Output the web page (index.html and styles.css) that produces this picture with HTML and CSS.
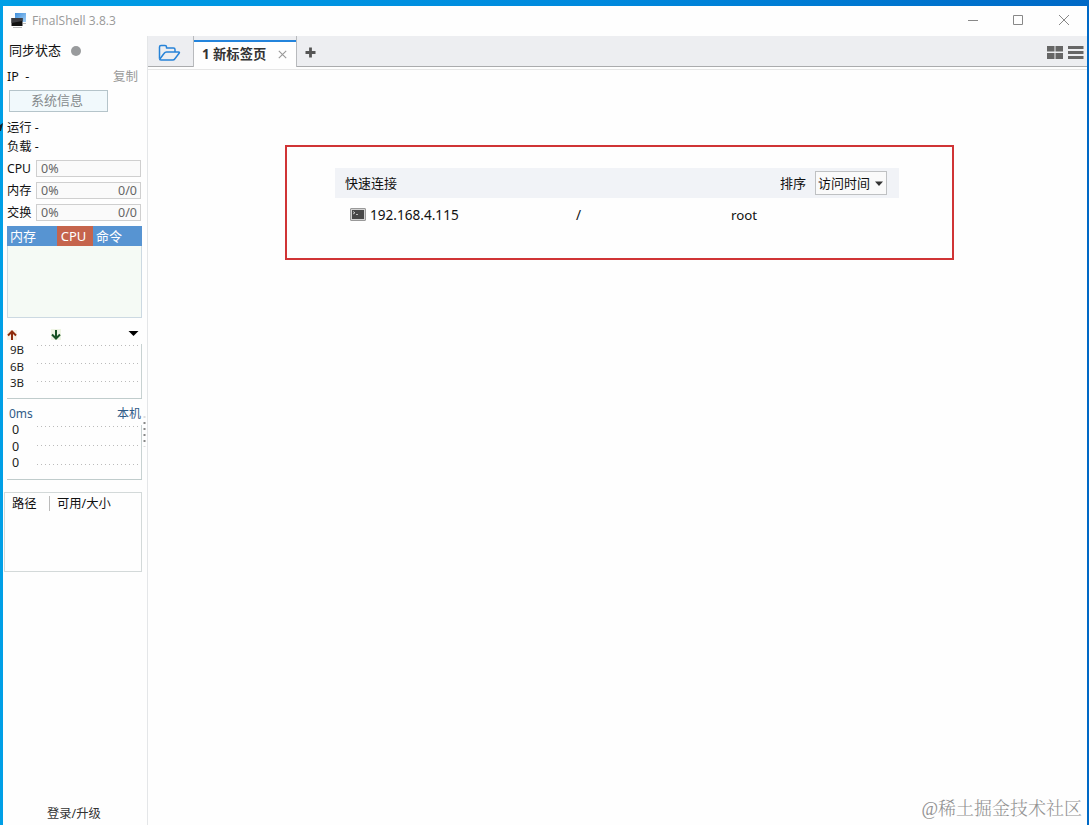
FILE: index.html
```html
<!DOCTYPE html>
<html lang="zh-CN">
<head>
<meta charset="utf-8">
<title>FinalShell 3.8.3</title>
<link rel="stylesheet" href="styles.css">
</head>
<body>
<div class="desktop">
<svg class="desktop-icon" width="3" height="9" viewBox="0 0 3 9"><path d="M3 0L1 8H0V2z" fill="#16222a"/></svg>
<div class="window">
  <header class="titlebar">
    <svg class="logo" width="17" height="17" viewBox="0 0 17 17">
      <defs><linearGradient id="screen" x1="0" y1="0" x2="1" y2="1"><stop offset="0" stop-color="#3f8fdc"/><stop offset="1" stop-color="#a5d0f5"/></linearGradient></defs>
      <rect x="4" y="1" width="11" height="9" fill="url(#screen)"/>
      <rect x="0.5" y="6" width="11" height="8" fill="#111"/>
      <path d="M0.5 6h11v3l-11 2z" fill="#3c3c40"/>
      <path d="M2 15.500h9M12 11.500h3" stroke="#bbb"/>
    </svg>
    <span class="app-name">FinalShell 3.8.3</span>
    <svg class="controls" width="103" height="12" viewBox="0 0 103 12" fill="none" stroke="#888">
      <path d="M0 6.500h10M45.500 1.500h9v9h-9zM91 1l10 10M101 1l-10 10"/>
    </svg>
  </header>
  <div class="body">
    <aside class="sidebar">
      <div class="sync"><span>同步状态</span><i class="dot"></i></div>
      <div class="ip"><span>IP&nbsp; -</span><span class="copy">复制</span></div>
      <div class="sysinfo">系统信息</div>
      <div class="stat">运行 -</div>
      <div class="stat">负载 -</div>
      <div class="meters">
        <div class="meter"><span class="name">CPU</span><div class="track"><span>0%</span></div></div>
        <div class="meter"><span class="name">内存</span><div class="track"><span>0%</span><span>0/0</span></div></div>
        <div class="meter"><span class="name">交换</span><div class="track"><span>0%</span><span>0/0</span></div></div>
      </div>
      <div class="procs">
        <div class="procs-head"><span class="col-mem">内存</span><span class="col-cpu">CPU</span><span class="col-cmd">命令</span></div>
      </div>
      <div class="net-head">
        <svg width="136" height="14" viewBox="0 0 136 14" fill="none">
          <rect x="0" y="2" width="10" height="10" fill="#f7f3e8"/>
          <path d="M5 12V4M1 7.500l4-4 4 4" stroke="#8f2c0c" stroke-width="2"/>
          <rect x="44" y="1" width="10" height="11" fill="#eef4e4"/>
          <path d="M49 2v8M45 6.500l4 4 4-4" stroke="#175223" stroke-width="2"/>
          <path d="M121.500 3h10l-5 5z" fill="#000"/>
        </svg>
      </div>
      <div class="chart net">
        <div class="labels"><span>9B</span><span>6B</span><span>3B</span></div>
        <div class="plot"><i></i><i></i><i></i></div>
      </div>
      <div class="ping-head"><span>0ms</span><span>本机</span></div>
      <div class="chart ping">
        <div class="labels"><span>0</span><span>0</span><span>0</span></div>
        <div class="plot"><i></i><i></i><i></i></div>
      </div>
      <div class="disk"><span class="path">路径</span><span class="size">可用/大小</span></div>
      <div class="login">登录/升级</div>
      <svg class="grip" width="3" height="32" viewBox="0 0 3 32"><path d="M1.500 1v2M1.500 31v1" stroke="#ddd" stroke-width="2"/><path d="M1.500 7v2M1.500 13v2M1.500 19v2M1.500 25v2" stroke="#888" stroke-width="2"/></svg>
    </aside>
    <main class="main">
      <nav class="tabs">
        <div class="folder">
          <svg width="23" height="18" viewBox="0 0 23 18" fill="none" stroke="#2783d8" stroke-width="1.500" stroke-linejoin="round">
            <path d="M1.500 14.500V3q0-1.500 1.500-1.500h4q1.500 0 1.500 1.500v1h7q1.500 0 1.500 1.500v2.500"/>
            <path d="M1.500 15.500l4.500-6q1-1.500 2.500-1.500h12q1.500 0 .6 1.200l-4 5.300q-1 1.500-2.500 1.500H3q-1.500 0-1.500-1.500"/>
          </svg>
        </div>
        <div class="tab"><b>1 新标签页</b><svg width="9" height="9" viewBox="0 0 9 9"><path d="M.8.800l7.400 7.400M8.200.800L.8 8.200" stroke="#999" stroke-width="1.100"/></svg></div>
        <div class="add"><svg width="11" height="11" viewBox="0 0 11 11"><path d="M5.500.500v10M.5 5.500h10" stroke="#555" stroke-width="2.800"/></svg></div>
        <div class="views">
          <svg width="37" height="14" viewBox="0 0 37 14" fill="#666">
            <path d="M0 1h7.500v5.500H0zM8.500 1H16v5.500H8.500zM0 8h7.500v6H0zM8.500 8H16v6H8.500zM21 1h15.500v3H21zM21 6h15.500v3H21zM21 11h15.500v3H21z"/>
          </svg>
        </div>
      </nav>
      <section class="highlight">
        <div class="quick-head">
          <span class="quick-title">快速连接</span>
          <span class="sort">排序</span>
          <div class="select"><span>访问时间</span><svg width="8" height="5" viewBox="0 0 8 5"><path d="M0 .5h8L4 5z" fill="#333"/></svg></div>
        </div>
        <div class="host">
          <svg width="16" height="14" viewBox="0 0 16 14">
            <rect x=".5" y=".5" width="15" height="12" rx=".5" fill="#d2d2d2" stroke="#999"/>
            <rect x="2" y="2" width="12" height="9" fill="#484848"/>
            <path d="M3 3.500l2 1.300-2 1.200M6 6.500h2" stroke="#ddd" fill="none" stroke-width=".8"/>
          </svg>
          <span class="address">192.168.4.115</span><span class="dir">/</span><span class="user">root</span>
        </div>
      </section>
      <div class="watermark">@稀土掘金技术社区</div>
    </main>
  </div>
</div>
</div>
</body>
</html>
```
FILE: styles.css
```css
* { box-sizing: border-box; }
body {
  margin: 0;
  color: #111;
  font: 13px/16px "Noto Sans", "Noto Sans CJK SC", sans-serif;
}
.desktop {
  position: relative;
  height: 825px;
  padding: 6px 2px 0 3px;
  overflow: hidden;
  background: linear-gradient(90deg, #009fe6, #0089dd 55%, #0069c6);
}
.desktop-icon { position: absolute; left: 0; top: 123px; }
.window { display: flex; flex-direction: column; height: 819px; background: #fefefe; white-space: nowrap; }
.titlebar { display: flex; align-items: center; height: 30px; padding: 0 19px 2px 8px; color: #999; font-family: "Open Sans", "Noto Sans", sans-serif; font-size: 12px; }
.app-name { flex: 1; margin-left: 4px; padding-top: 1px; letter-spacing: 0.06px; }
.controls { margin-right: -3px; }
.body { display: flex; flex: 1; }

.sidebar { position: relative; display: flex; flex-direction: column; width: 145px; border-right: 1px solid #e4e6e8; font-size: 12.500px; }
.sync { display: flex; align-items: center; height: 28px; padding-left: 6px; font-size: 13px; }
.dot { width: 10px; height: 10px; margin: 2px 0 0 10px; border-radius: 50%; background: #999b9d; }
.ip { display: flex; align-items: center; justify-content: space-between; height: 26px; padding: 0 9px 0 4px; font-size: 12.500px; }
.copy { color: #999; font-size: 12.500px; }
.sysinfo { width: 99px; height: 22px; margin: 0 0 6px 6px; padding-right: 3px; border: 1px solid #b5c4ca; background: #f1f9fc; color: #858a8c; font-size: 13px; line-height: 18px; text-align: center; }
.stat { height: 19px; padding-left: 4px; line-height: 19px; font-size: 12.300px; }
.meters { padding: 1px 6px 1px 4px; }
.meter { display: flex; align-items: center; height: 22px; }
.name { width: 29px; padding-top: 1px; font-size: 12.200px; }
.track { display: flex; justify-content: space-between; width: 105px; height: 17px; padding: 0 3px 0 4px; border: 1px solid #cfcfcf; background: #fafafa; color: #666; font-size: 12.500px; line-height: 16px; }
.procs { width: 135px; height: 92px; margin: 2px 0 0 4px; border: solid #ccd9e2; border-width: 0 1px 1px; background: #f5faf5; }
.procs-head { display: flex; height: 20px; margin: 0 -1px; background: #5794d2; color: #fff; font-size: 13px; line-height: 20px; }
.col-mem { width: 50px; padding-left: 3px; }
.col-cpu { width: 36px; padding-right: 3px; background: #c5644c; text-align: center; font-size: 13px; }
.col-cmd { padding-left: 3px; }
.net-head { height: 16px; margin: 10px 0 0 4px; }
.net-head svg { display: block; }
.chart { display: flex; width: 135px; height: 55px; margin-left: 4px; border-bottom: 1px solid #c0cccc; font-size: 11.500px; }
.labels { display: flex; flex-direction: column; width: 30px; padding-left: 3px; line-height: 17px; color: #222; }
.net .labels { line-height: 16.600px; margin-top: -2px; }
.ping .labels { padding: 0 0 0 5px; line-height: 16.500px; margin-top: -3px; font-size: 12.500px; }
.plot { display: flex; flex-direction: column; gap: 17px; flex: 1; padding: 1px 3px 0 0; border-right: 1px solid #c8d2d2; }
.plot i { height: 1px; background: repeating-linear-gradient(90deg, #bbb 0 1px, transparent 1px 4px); }
.ping-head { display: flex; align-items: center; justify-content: space-between; height: 26px; padding: 4px 6px 0; color: #315b87; font-size: 12px; }
.ping { height: 55px; }
.ping .plot { padding-top: 1px; gap: 18px; }
.disk { display: flex; width: 138px; height: 80px; margin: 12px 0 0 1px; padding: 3px 0 0 7px; border: 1px solid #d3d9d9; font-size: 12.300px; }
.path { width: 38px; height: 15px; border-right: 1px solid #bbb; }
.size { padding-left: 7px; }
.login { margin: auto 0 3px 44px; color: #333; font-size: 12.300px; }
.grip { position: absolute; left: 140px; top: 379px; }

.main { position: relative; display: flex; flex-direction: column; flex: 1; }
.tabs { display: flex; height: 34px; border-bottom: 1px solid #e6e6e6; background: linear-gradient(#edeef1 30px, #aaabad 30px 31px, #fefefe 31px); }
.folder { width: 45px; padding: 8px 0 0 10px; }
.tab { display: flex; align-items: center; justify-content: space-between; width: 104px; height: 31px; padding: 5px 9px 0 8px; border: solid #b8babd; border-width: 0 1px; background: linear-gradient(#edeef1 4px, #2384dc 4px 6px, #fefefe 6px); color: #333; }
.tab b { font-size: 13.300px; }
.tab svg { margin-top: 1px; }
.add { padding: 11px 0 0 8px; }
.add svg, .views svg { display: block; }
.views { margin-left: auto; padding: 9px 3px 0 0; }
.highlight { width: 669px; height: 115px; margin: 75px 0 0 137px; padding: 21px 53px 0 48px; border: 2px solid #d03435; }
.quick-head { display: flex; align-items: center; height: 30px; padding: 0 12px 0 10px; background: #f1f3f7; }
.quick-title { flex: 1; }
.sort { margin-right: 9px; }
.select { display: flex; align-items: center; justify-content: space-between; width: 72px; height: 24px; padding: 0 3px 0 2px; border: 1px solid #bfc1c3; background: #fafafa; }
.host { display: flex; align-items: center; height: 34px; padding-left: 15px; font-size: 13.600px; }
.address { width: 206px; margin-left: 4px; }
.dir { width: 155px; }
.user { font-size: 13.300px; }
.watermark { margin: auto 5px 4px auto; color: #929292; font: 300 18px/24px "Liberation Serif", "Noto Serif CJK SC", "Noto Sans CJK SC", serif; }
```
